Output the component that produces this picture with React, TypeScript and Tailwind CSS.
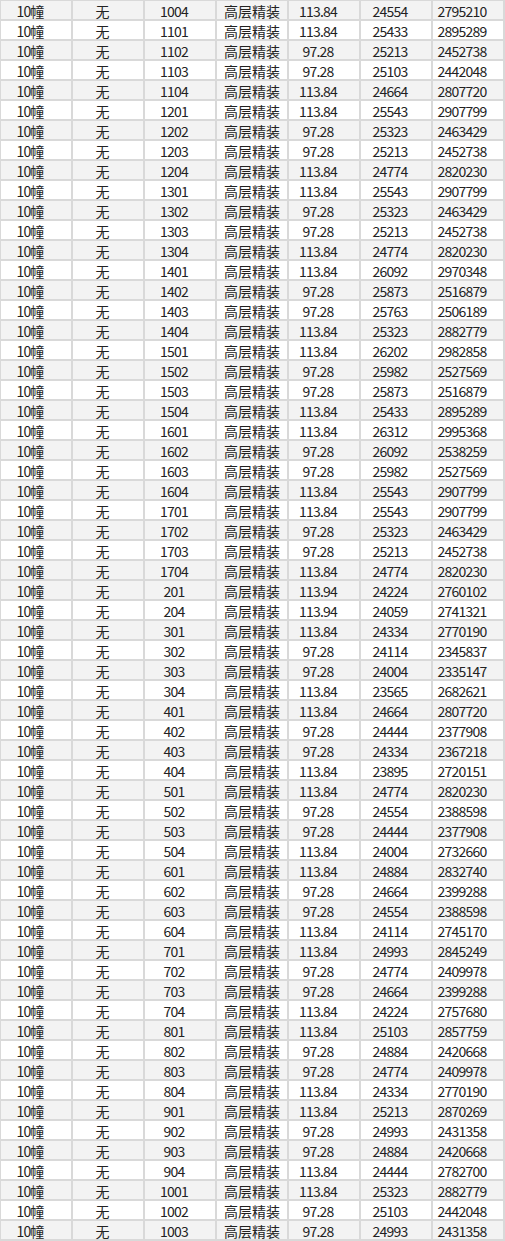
import React from "react";

const raw = `1004 113.84 24554 2795210
1101 113.84 25433 2895289
1102 97.28 25213 2452738
1103 97.28 25103 2442048
1104 113.84 24664 2807720
1201 113.84 25543 2907799
1202 97.28 25323 2463429
1203 97.28 25213 2452738
1204 113.84 24774 2820230
1301 113.84 25543 2907799
1302 97.28 25323 2463429
1303 97.28 25213 2452738
1304 113.84 24774 2820230
1401 113.84 26092 2970348
1402 97.28 25873 2516879
1403 97.28 25763 2506189
1404 113.84 25323 2882779
1501 113.84 26202 2982858
1502 97.28 25982 2527569
1503 97.28 25873 2516879
1504 113.84 25433 2895289
1601 113.84 26312 2995368
1602 97.28 26092 2538259
1603 97.28 25982 2527569
1604 113.84 25543 2907799
1701 113.84 25543 2907799
1702 97.28 25323 2463429
1703 97.28 25213 2452738
1704 113.84 24774 2820230
201 113.94 24224 2760102
204 113.94 24059 2741321
301 113.84 24334 2770190
302 97.28 24114 2345837
303 97.28 24004 2335147
304 113.84 23565 2682621
401 113.84 24664 2807720
402 97.28 24444 2377908
403 97.28 24334 2367218
404 113.84 23895 2720151
501 113.84 24774 2820230
502 97.28 24554 2388598
503 97.28 24444 2377908
504 113.84 24004 2732660
601 113.84 24884 2832740
602 97.28 24664 2399288
603 97.28 24554 2388598
604 113.84 24114 2745170
701 113.84 24993 2845249
702 97.28 24774 2409978
703 97.28 24664 2399288
704 113.84 24224 2757680
801 113.84 25103 2857759
802 97.28 24884 2420668
803 97.28 24774 2409978
804 113.84 24334 2770190
901 113.84 25213 2870269
902 97.28 24993 2431358
903 97.28 24884 2420668
904 113.84 24444 2782700
1001 113.84 25323 2882779
1002 97.28 25103 2442048
1003 97.28 24993 2431358`;

const rows = raw.split("\n").map((l) => l.trim().split(/\s+/));

function Cell({ children, cjk }: { children: React.ReactNode; cjk?: boolean }) {
  return (
    <div
      className={
        "h-[18px] flex items-center justify-center whitespace-nowrap text-[14px] leading-[18px] pt-[2px] " +
        (cjk ? "" : "pr-[12px] tracking-[-0.8px]")
      }
    >
      {children}
    </div>
  );
}

export default function App() {
  return (
    <div
      className="w-[505px] bg-[#d9d9d9] pt-px pl-px text-[#222222]"
      style={{ fontFamily: '"Noto Sans CJK SC", "Noto Sans", sans-serif' }}
    >
      {rows.map((r, i) => {
        const gray = i < 29 ? i % 2 === 0 : i % 2 === 1;
        return (
          <div
            key={i}
            className="grid grid-cols-[70px_70px_70px_70px_70px_70px_70px] gap-x-[2px] pb-[2px]"
          >
            {[`10幢`, `无`, r[0], `高层精装`, r[1], r[2], r[3]].map((t, j) => (
              <div key={j} className={gray ? "bg-[#f3f3f3]" : "bg-white"}>
                <Cell cjk={j === 3}>{t}</Cell>
              </div>
            ))}
          </div>
        );
      })}
    </div>
  );
}
